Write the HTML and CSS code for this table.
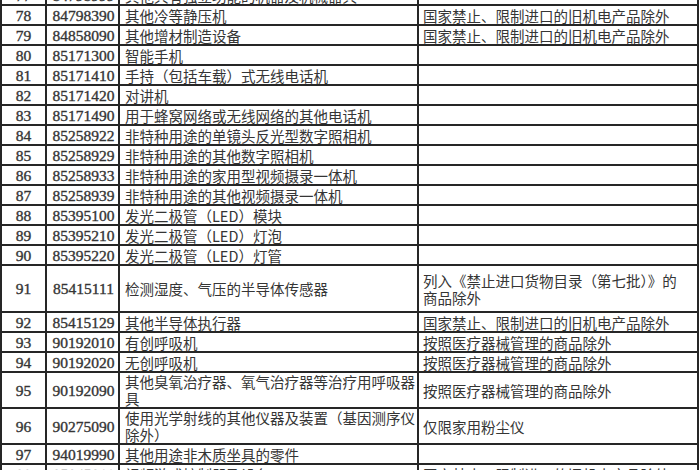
FILE: index.html
```html
<!DOCTYPE html>
<html lang="zh-CN">
<head>
<meta charset="utf-8">
<title>商品目录</title>
<link rel="stylesheet" href="styles.css">
</head>
<body>
<table class="list">
  <colgroup>
    <col class="c-no">
    <col class="c-code">
    <col class="c-name">
    <col class="c-note">
  </colgroup>
  <tbody>
    <tr><td class="no">77</td><td class="code">84798999</td><td class="name">其他具有独立功能的机器及机械器具</td><td class="note"></td></tr>
    <tr><td class="no">78</td><td class="code">84798390</td><td class="name">其他冷等静压机</td><td class="note">国家禁止、限制进口的旧机电产品除外</td></tr>
    <tr><td class="no">79</td><td class="code">84858090</td><td class="name">其他增材制造设备</td><td class="note">国家禁止、限制进口的旧机电产品除外</td></tr>
    <tr><td class="no">80</td><td class="code">85171300</td><td class="name">智能手机</td><td class="note"></td></tr>
    <tr><td class="no">81</td><td class="code">85171410</td><td class="name">手持（包括车载）式无线电话机</td><td class="note"></td></tr>
    <tr><td class="no">82</td><td class="code">85171420</td><td class="name">对讲机</td><td class="note"></td></tr>
    <tr><td class="no">83</td><td class="code">85171490</td><td class="name">用于蜂窝网络或无线网络的其他电话机</td><td class="note"></td></tr>
    <tr><td class="no">84</td><td class="code">85258922</td><td class="name">非特种用途的单镜头反光型数字照相机</td><td class="note"></td></tr>
    <tr><td class="no">85</td><td class="code">85258929</td><td class="name">非特种用途的其他数字照相机</td><td class="note"></td></tr>
    <tr><td class="no">86</td><td class="code">85258933</td><td class="name">非特种用途的家用型视频摄录一体机</td><td class="note"></td></tr>
    <tr><td class="no">87</td><td class="code">85258939</td><td class="name">非特种用途的其他视频摄录一体机</td><td class="note"></td></tr>
    <tr><td class="no">88</td><td class="code">85395100</td><td class="name">发光二极管（LED）模块</td><td class="note"></td></tr>
    <tr><td class="no">89</td><td class="code">85395210</td><td class="name">发光二极管（LED）灯泡</td><td class="note"></td></tr>
    <tr><td class="no">90</td><td class="code">85395220</td><td class="name">发光二极管（LED）灯管</td><td class="note"></td></tr>
    <tr class="tall"><td class="no">91</td><td class="code">85415111</td><td class="name">检测湿度、气压的半导体传感器</td><td class="note">列入《禁止进口货物目录（第七批）》的<br>商品除外</td></tr>
    <tr><td class="no">92</td><td class="code">85415129</td><td class="name">其他半导体执行器</td><td class="note">国家禁止、限制进口的旧机电产品除外</td></tr>
    <tr><td class="no">93</td><td class="code">90192010</td><td class="name">有创呼吸机</td><td class="note">按照医疗器械管理的商品除外</td></tr>
    <tr><td class="no">94</td><td class="code">90192020</td><td class="name">无创呼吸机</td><td class="note">按照医疗器械管理的商品除外</td></tr>
    <tr class="double"><td class="no">95</td><td class="code">90192090</td><td class="name">其他臭氧治疗器、氧气治疗器等治疗用呼吸器<br>具</td><td class="note">按照医疗器械管理的商品除外</td></tr>
    <tr class="double"><td class="no">96</td><td class="code">90275090</td><td class="name">使用光学射线的其他仪器及装置（基因测序仪<br>除外）</td><td class="note">仅限家用粉尘仪</td></tr>
    <tr><td class="no">97</td><td class="code">94019990</td><td class="name">其他用途非木质坐具的零件</td><td class="note"></td></tr>
    <tr><td class="no">98</td><td class="code">95045011</td><td class="name">视频游戏控制器及设备</td><td class="note">国家禁止、限制进口的旧机电产品除外</td></tr>
  </tbody>
</table>
</body>
</html>
```
FILE: styles.css
```css
html, body {
  margin: 0;
  padding: 0;
  background: #ffffff;
  overflow: hidden;
  width: 700px;
  height: 470px;
}

.list {
  border-collapse: collapse;
  table-layout: fixed;
  width: 699px;
  margin-top: -16px;
  color: #353535;
  font-family: "Noto Sans CJK SC", "Noto Sans", sans-serif;
  font-size: 14.5px;
}

.c-no { width: 45px; }
.c-code { width: 73px; }
.c-name { width: 299px; }
.c-note { width: 280px; }

.list td {
  border: 2px solid #262626;
  height: 18px;
  padding: 0 4px;
  line-height: 17px;
  white-space: nowrap;
  overflow: hidden;
  vertical-align: middle;
}

.list td.no,
.list td.code {
  text-align: center;
  font-family: "Liberation Serif", "DejaVu Serif", serif;
  font-size: 15.5px;
  -webkit-text-stroke: 0.35px #353535;
  padding: 0;
}

.list td.code {
  padding-left: 2px;
}

.list td.name {
  padding-left: 5px;
}

.list tr.tall td { height: 45px; }
.list tr.double td { height: 33.5px; }
```
